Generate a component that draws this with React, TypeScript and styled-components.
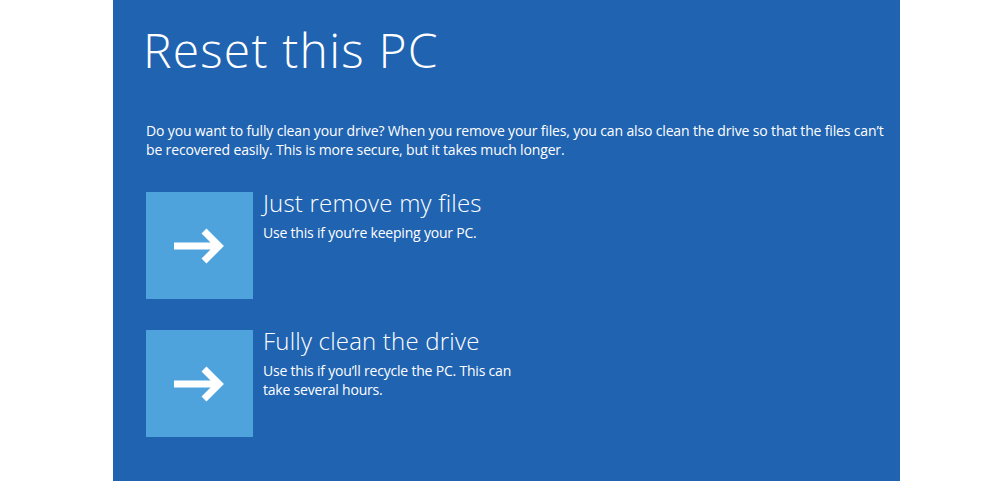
import React from 'react';
import styled, { createGlobalStyle } from 'styled-components';

const GlobalStyle = createGlobalStyle`
  html, body {
    margin: 0;
    padding: 0;
    background: #ffffff;
  }
  body {
    font-family: "Open Sans", "Noto Sans", sans-serif;
  }
`;

const StyledPage = styled.div`
  display: flex;
  width: 1000px;
  height: 481px;
  overflow: hidden;
`;
const StyledPanel = styled.main`
  margin-left: 113px;
  width: 787px;
  height: 481px;
  background: #1f63b1;
  color: #ffffff;
  padding: 20px 0 0 33px;
  box-sizing: border-box;
`;
const StyledTitle = styled.h1`
  margin: 0 0 0 -3px;
  font-size: 48px;
  font-weight: 300;
  line-height: 60px;
  letter-spacing: 1.2px;
`;
const StyledDesc = styled.p`
  margin: 41px 0 0;
  font-size: 14px;
  line-height: 19px;
  letter-spacing: -0.15px;
  white-space: nowrap;
`;
const StyledOptions = styled.div`
  display: flex;
  flex-direction: column;
  gap: 31px;
  margin-top: 33px;
`;
const StyledOption = styled.div`
  display: flex;
  gap: 10px;
`;
const StyledTile = styled.div`
  width: 107px;
  height: 107px;
  flex: none;
  background: #4ea3dd;
  display: flex;
  align-items: center;
  justify-content: center;
`;
const StyledText = styled.div`
  display: flex;
  flex-direction: column;
`;
const StyledOptionTitle = styled.div`
  font-size: 24px;
  font-weight: 300;
  line-height: 22px;
  letter-spacing: 0.2px;
`;
const StyledOptionDesc = styled.div<{ width?: number }>`
  margin-top: 9px;
  font-size: 14px;
  line-height: 19px;
  letter-spacing: -0.2px;
  max-width: ${(p) => (p.width ? `${p.width}px` : 'none')};
`;

const Arrow = () => (
  <svg width="54" height="40" viewBox="0 0 54 40">
    <path
      d="M1 20 H46 M31 5 L46 20 L31 35"
      stroke="#ffffff"
      strokeWidth="7"
      fill="none"
      strokeLinejoin="miter"
    />
  </svg>
);

const options = [
  { title: 'Just remove my files', desc: 'Use this if you\u2019re keeping your PC.' },
  {
    title: 'Fully clean the drive',
    desc: 'Use this if you\u2019ll recycle the PC. This can take several hours.',
    width: 262,
  },
];

const App = () => {
  return (
    <>
      <GlobalStyle />
      <StyledPage>
        <StyledPanel>
          <StyledTitle>Reset this PC</StyledTitle>
          <StyledDesc>
            Do you want to fully clean your drive? When you remove your files, you can also clean the drive so that the files can&rsquo;t
            <br />
            be recovered easily. This is more secure, but it takes much longer.
          </StyledDesc>
          <StyledOptions>
            {options.map((o) => (
              <StyledOption key={o.title}>
                <StyledTile>
                  <Arrow />
                </StyledTile>
                <StyledText>
                  <StyledOptionTitle>{o.title}</StyledOptionTitle>
                  <StyledOptionDesc width={o.width}>{o.desc}</StyledOptionDesc>
                </StyledText>
              </StyledOption>
            ))}
          </StyledOptions>
        </StyledPanel>
      </StyledPage>
    </>
  );
};

export default App;
